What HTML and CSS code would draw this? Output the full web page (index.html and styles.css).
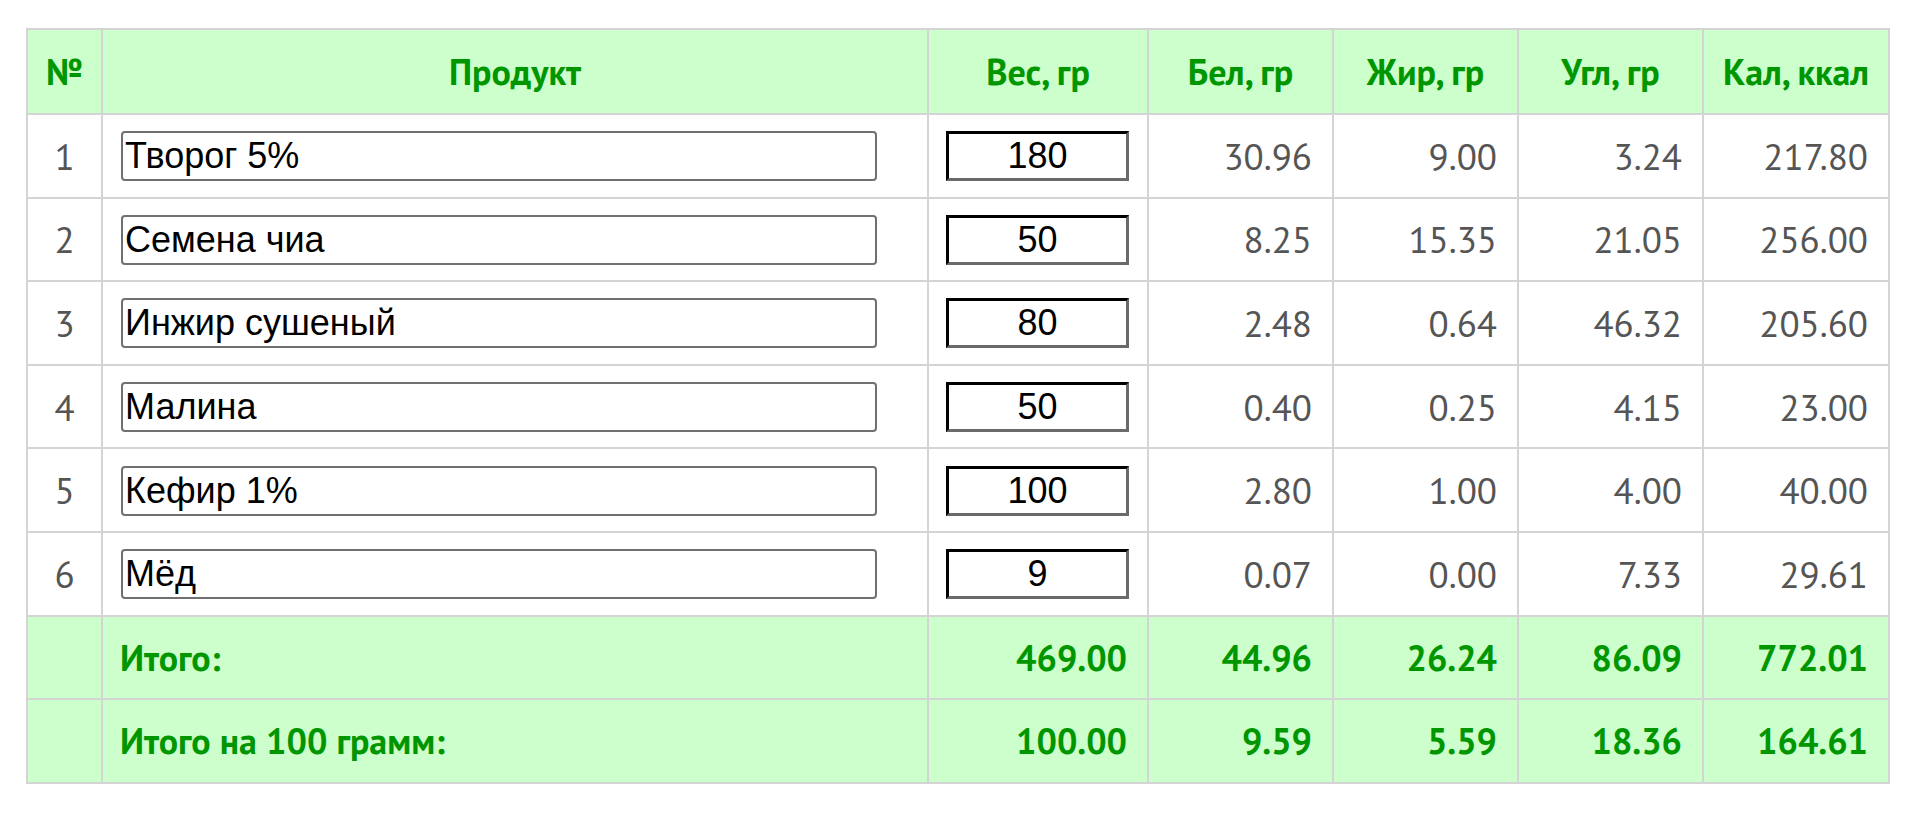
FILE: index.html
```html
<!DOCTYPE html>
<html lang="ru">
<head>
  <meta charset="UTF-8">
  <title>Калькулятор КБЖУ</title>
  <link rel="stylesheet" href="styles.css">
</head>
<body>

<div class="wrap">
<table class="calc">
  <colgroup>
    <col class="c-num">
    <col class="c-name">
    <col class="c-weight">
    <col class="c-val">
    <col class="c-val">
    <col class="c-val">
    <col class="c-kcal">
  </colgroup>
  <thead>
    <tr>
      <th>№</th>
      <th>Продукт</th>
      <th>Вес, гр</th>
      <th>Бел, гр</th>
      <th>Жир, гр</th>
      <th>Угл, гр</th>
      <th>Кал, ккал</th>
    </tr>
  </thead>
  <tbody>
    <tr>
      <td class="num">1</td>
      <td class="name"><input type="text" class="product" value="Творог 5%"></td>
      <td class="weight"><input type="text" class="grams" value="180"></td>
      <td>30.96</td>
      <td>9.00</td>
      <td>3.24</td>
      <td>217.80</td>
    </tr>
    <tr>
      <td class="num">2</td>
      <td class="name"><input type="text" class="product" value="Семена чиа"></td>
      <td class="weight"><input type="text" class="grams" value="50"></td>
      <td>8.25</td>
      <td>15.35</td>
      <td>21.05</td>
      <td>256.00</td>
    </tr>
    <tr>
      <td class="num">3</td>
      <td class="name"><input type="text" class="product" value="Инжир сушеный"></td>
      <td class="weight"><input type="text" class="grams" value="80"></td>
      <td>2.48</td>
      <td>0.64</td>
      <td>46.32</td>
      <td>205.60</td>
    </tr>
    <tr>
      <td class="num">4</td>
      <td class="name"><input type="text" class="product" value="Малина"></td>
      <td class="weight"><input type="text" class="grams" value="50"></td>
      <td>0.40</td>
      <td>0.25</td>
      <td>4.15</td>
      <td>23.00</td>
    </tr>
    <tr>
      <td class="num">5</td>
      <td class="name"><input type="text" class="product" value="Кефир 1%"></td>
      <td class="weight"><input type="text" class="grams" value="100"></td>
      <td>2.80</td>
      <td>1.00</td>
      <td>4.00</td>
      <td>40.00</td>
    </tr>
    <tr>
      <td class="num">6</td>
      <td class="name"><input type="text" class="product" value="Мёд"></td>
      <td class="weight"><input type="text" class="grams" value="9"></td>
      <td>0.07</td>
      <td>0.00</td>
      <td>7.33</td>
      <td>29.61</td>
    </tr>
  </tbody>
  <tfoot>
    <tr>
      <td></td>
      <td class="label">Итого:</td>
      <td>469.00</td>
      <td>44.96</td>
      <td>26.24</td>
      <td>86.09</td>
      <td>772.01</td>
    </tr>
    <tr>
      <td></td>
      <td class="label">Итого на 100 грамм:</td>
      <td>100.00</td>
      <td>9.59</td>
      <td>5.59</td>
      <td>18.36</td>
      <td>164.61</td>
    </tr>
  </tfoot>
</table>
</div>

</body>
</html>
```
FILE: styles.css
```css
body {
  margin: 0;
  font-family: "PT Sans", "Noto Sans", sans-serif;
  background: #fff;
}

.wrap {
  padding: 28px 0 0 26px;
}

.calc {
  border-collapse: collapse;
  table-layout: fixed;
  width: 1862px;
  border: 2px solid #d4d4d4;
}

.c-num    { width: 75px; }
.c-name   { width: 826px; }
.c-weight { width: 220px; }
.c-val    { width: 185px; }
.c-kcal   { width: 186px; }

.calc th,
.calc td {
  border: 2px solid #d4d4d4;
  padding: 0 20px 0 0;
  height: 81.6px;
  vertical-align: middle;
}

/* шапка и итоги */
.calc th {
  height: 83px;
  padding: 0;
  background: #ccffcc;
  color: #009600;
  font-size: 36px;
  font-weight: bold;
  text-align: center;
}

.calc tbody td {
  font-size: 37px;
  color: #555;
  text-align: right;
}

.calc tbody td.num {
  text-align: center;
  padding: 0;
}

.calc tbody td.name {
  text-align: left;
  padding: 0 0 0 18px;
}

.calc tbody td.weight {
  text-align: left;
  padding: 0 0 0 17px;
}

.calc tfoot td {
  background: #ccffcc;
  color: #009600;
  font-size: 36px;
  font-weight: bold;
  text-align: right;
}

.calc tfoot td.label {
  text-align: left;
  padding: 0 0 0 17px;
}

/* поля ввода */
.product,
.grams {
  font-family: "Liberation Sans", Arial, sans-serif;
  font-size: 36px;
  color: #000;
  background: #fff;
  box-sizing: border-box;
  height: 50px;
  margin: 1px 0 0 0;
  display: block;
}

.product {
  width: 756px;
  border: 2px solid #707070;
  border-radius: 4px;
  padding: 0 2px;
}

.grams {
  width: 183px;
  border-style: solid;
  border-width: 3px;
  border-color: #000 #6a6a6a #6a6a6a #000;
  padding: 0 4px;
  text-align: center;
}
```
